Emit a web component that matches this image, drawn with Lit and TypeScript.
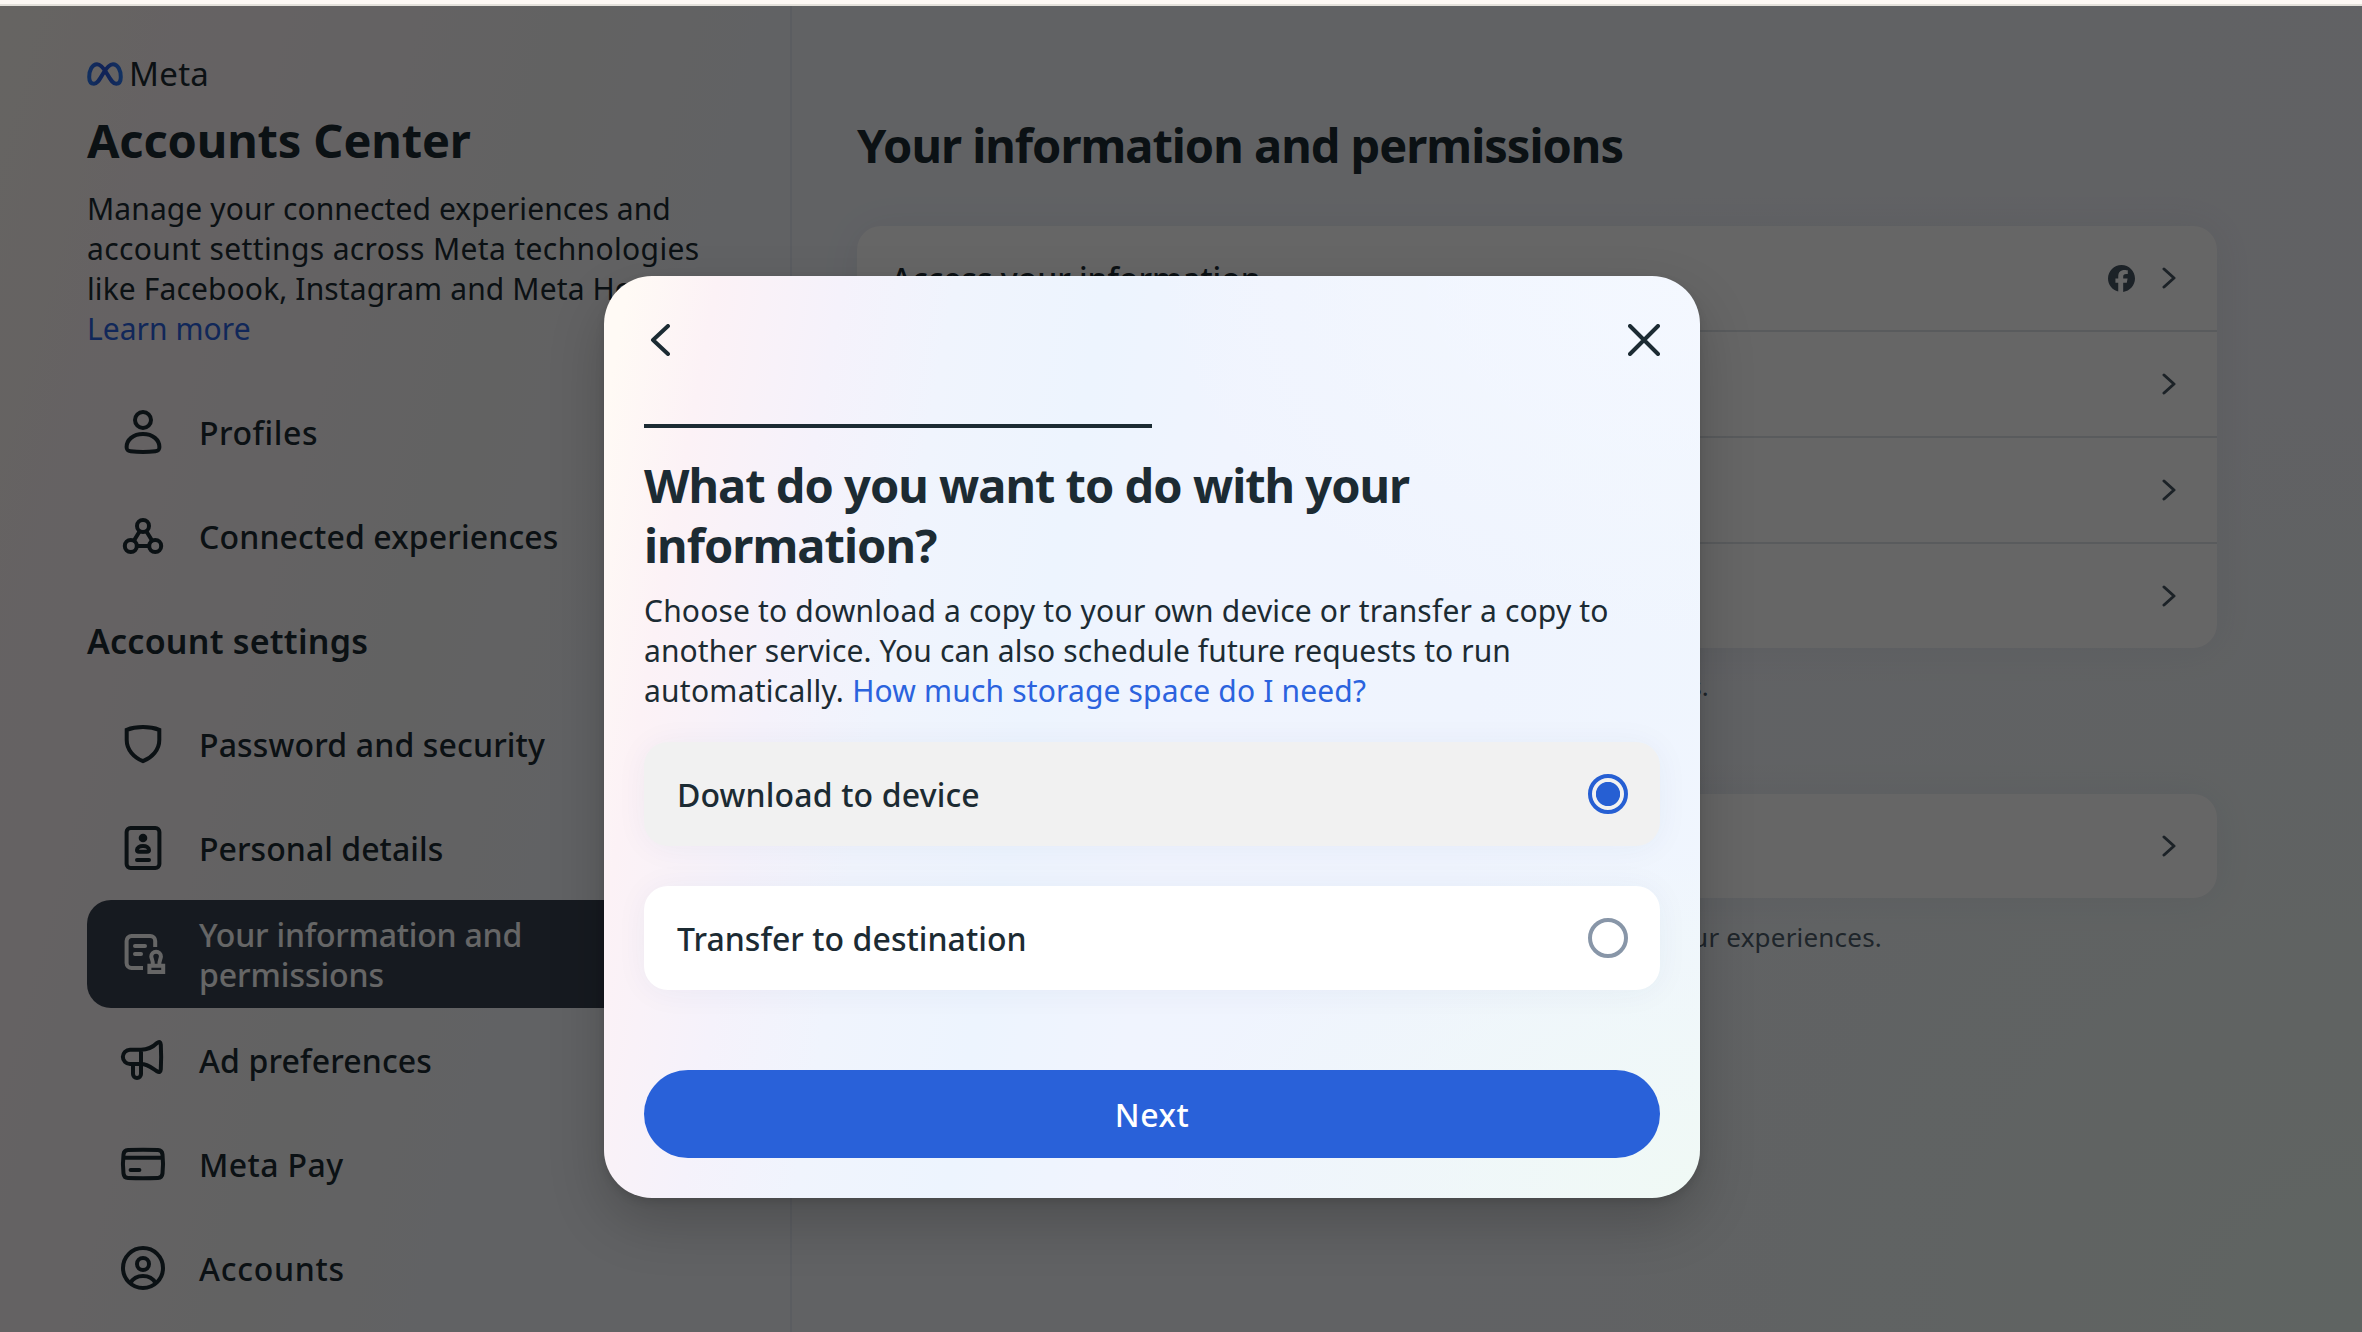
import { LitElement, html, svg, css, TemplateResult } from "lit";
import { classMap } from "lit/directives/class-map.js";

type Line = { text: string; track: number; link?: boolean };

const line = (l: Line) =>
  html`<span class=${classMap({ link: !!l.link })} style="letter-spacing:${l.track}px">${l.text}</span>`;

const stroke = (content: TemplateResult) => html`
  <svg class="nav-icon" viewBox="0 0 48 48" fill="none" stroke="currentColor" stroke-width="4"
    stroke-linecap="round" stroke-linejoin="round">${content}</svg>`;

const icons: Record<string, TemplateResult> = {
  profile: stroke(svg`<circle cx="24" cy="12" r="8"/>
    <path d="M24 26C14 26 7.6 32 7.6 39c0 3 1 3.9 4 4.2 6 .7 18.800 .7 24.800 0 3-.3 4-1.200 4-4.200C40.400 32 34 26 24 26Z"/>`),
  connected: stroke(svg`<circle cx="24" cy="14" r="6"/><circle cx="11.800" cy="34" r="6"/><circle cx="36.200" cy="34" r="6"/>
    <path d="M20.500 19.500L15 28.500M27.500 19.500L33 28.500M18 34H30"/>`),
  shield: stroke(svg`<path stroke-linejoin="miter" d="M7.700 9.800C17 6.200 31 6.200 40.300 9.800V20C40.300 30 33 37.500 24 41.200 15 37.500 7.700 30 7.700 20Z"/>`),
  details: stroke(svg`<rect x="7.600" y="4" width="32.800" height="40" rx="4"/>
    <circle cx="24" cy="14" r="4.300" fill="currentColor" stroke="none"/>
    <path d="M18 26c0-2.500 2.500-4 6-4s6 1.500 6 4c0 1.400-.6 1.800-2 1.800h-8c-1.400 0-2-.4-2-1.800ZM18 36H30"/>`),
  stamp: stroke(svg`<path stroke-linecap="butt" d="M36.200 17V11a5 5 0 0 0-5-5H12.600a5 5 0 0 0-5 5V33a5 5 0 0 0 5 5H24"/>
    <path d="M16 16H26M16 24H22"/>
    <path stroke-linejoin="miter" d="M30.400 35.800H44.200V42H30.400Z"/>
    <path d="M33.800 35C34.500 31 32.300 29 32.300 26.500a4.800 4.800 0 0 1 9.600 0C41.900 29 39.800 31 40.500 35"/>`),
  horn: stroke(svg`<path d="M22 13.700H11a7 7 0 0 0 0 14.300H22c7 0 11 4.200 16 7.300 2.500 1.500 3.600 .5 3.800-2C42.300 25 42.300 17 41.800 8.500c-.2-2.500-1.600-3.500-3.800-1.500C33 12 29 13.700 22 13.700V28M14 28V38a4 4 0 0 0 8 0V28"/>`),
  card: stroke(svg`<path d="M9 10C18 9.800 30 9.800 39 10c3 .1 4.200 1.500 4.500 4.500 .7 6 .7 13 0 19-.3 3-1.500 4.400-4.500 4.500-9 .2-21 .2-30 0-3-.1-4.200-1.500-4.500-4.500-.7-6-.7-13 0-19C4.800 11.500 6 10.100 9 10ZM4.500 17.700H43.500M11.600 30H20.400"/>`),
  account: stroke(svg`<circle cx="24" cy="24" r="20"/><circle cx="24" cy="20" r="6"/>
    <path d="M11.500 39C14 34.500 18 32 24 32S34 34.500 36.500 39"/>`),
};

const chevron = html`
  <svg class="chevron" viewBox="0 0 14 22" fill="none" stroke="currentColor" stroke-width="3"
    stroke-linecap="round" stroke-linejoin="round"><path d="M2 2L12 11L2 20"/></svg>`;

const facebook = html`
  <svg class="facebook" viewBox="0 0 24 24" fill="currentColor">
    <path d="M24 12C24 5.400 18.600 0 12 0S0 5.400 0 12c0 5.600 3.900 10.300 9.100 11.600V15.700H6.600V12h2.500v-1.600c0-4.100 1.800-6 5.900-6 .8 0 2.100.2 2.600.3v3.400c-.3 0-.8 0-1.400 0-2 0-2.700.7-2.700 2.700V12h3.900l-.7 3.700h-3.200v8.200C19.400 23.200 24 18.100 24 12Z"/>
  </svg>`;

class SideNav extends LitElement {
  static styles = css`
    :host { display: block; width: 792px; flex: none; box-sizing: border-box; padding: 47px 87px 0;
      border-right: 2px solid #e4e8f2; color: #1c2b33; }
    svg { display: block; flex: none; }
    .brand { display: flex; align-items: center; gap: 6px; height: 42px; font-size: 33px; line-height: 42px; letter-spacing: 0.3px; }
    .brand svg { width: 36px; height: 24px; }
    .title { margin: 15px 0 0; font-size: 47px; line-height: 60px; font-weight: 700; letter-spacing: -0.15px; white-space: nowrap; }
    .intro { margin: 19px 0 31px; display: flex; flex-direction: column; font-size: 30px; line-height: 40px; white-space: pre; }
    .link { color: #2b63de; }
    .item { display: flex; align-items: center; gap: 32px; width: 618px; height: 104px; padding: 0 32px;
      box-sizing: border-box; border-radius: 24px; font-size: 32px; line-height: 40px; font-weight: 500; }
    .item.active { height: 108px; background: #384250; color: #fff; }
    .nav-icon { width: 48px; height: 48px; }
    .labels { display: flex; flex-direction: column; padding-top: 2px; }
    .section { height: 104px; padding-top: 2px; box-sizing: border-box; display: flex; align-items: center;
      font-size: 34px; font-weight: 600; letter-spacing: 0.22px; }
  `;
  private item(icon: string, lines: Line[], active = false) {
    return html`<div class=${classMap({ item: true, active })}>${icons[icon]}<div class="labels">${lines.map(line)}</div></div>`;
  }
  render() {
    return html`
      <div class="brand">
        <svg viewBox="0 0 36 24" fill="none" stroke="url(#m)" stroke-width="4">
          <defs><linearGradient id="m" gradientUnits="userSpaceOnUse" x1="0" y1="14" x2="36" y2="10">
            <stop offset="0" stop-color="#2d7af0"/><stop offset=".5" stop-color="#2b55d8"/><stop offset="1" stop-color="#2f7ff5"/>
          </linearGradient></defs>
          <path d="M2.200 15C2.200 8 5.200 2.200 10 2.200c4 0 7 4.300 10.500 10.300 3.500 6 5.500 9.200 8.700 9.200 3 0 4.600-2.700 4.600-6.700C33.800 8 30.800 2.200 26 2.200c-3.500 0-6.500 3.300-10.500 10.300C11.800 19 10 21.700 7 21.700 4 21.700 2.200 19.500 2.200 15Z"/>
        </svg>
        <span>Meta</span>
      </div>
      <h1 class="title">Accounts Center</h1>
      <div class="intro">
        ${[
          { text: "Manage your connected experiences and", track: 0.1 },
          { text: "account settings across Meta technologies", track: 0.37 },
          { text: "like Facebook, Instagram and Meta Horizon.", track: 0.12 },
          { text: "Learn more", track: 0.05, link: true },
        ].map(line)}
      </div>
      ${this.item("profile", [{ text: "Profiles", track: 0.55 }])}
      ${this.item("connected", [{ text: "Connected experiences", track: 0.15 }])}
      <div class="section">Account settings</div>
      ${this.item("shield", [{ text: "Password and security", track: 0.15 }])}
      ${this.item("details", [{ text: "Personal details", track: 0.05 }])}
      ${this.item("stamp", [{ text: "Your information and", track: -0.22 }, { text: "permissions", track: -0.05 }], true)}
      ${this.item("horn", [{ text: "Ad preferences", track: 0.15 }])}
      ${this.item("card", [{ text: "Meta Pay", track: 0.4 }])}
      ${this.item("account", [{ text: "Accounts", track: 0.75 }])}
    `;
  }
}
customElements.define("side-nav", SideNav);

class InfoPanel extends LitElement {
  static styles = css`
    :host { display: block; padding: 109px 0 0 65px; color: #1c2b33; }
    svg { display: block; flex: none; }
    .title { margin: 0 0 51px; font-size: 47px; line-height: 60px; font-weight: 700; letter-spacing: -1px; white-space: nowrap; }
    .card { width: 1360px; border-radius: 24px; background: #fff; box-shadow: 0 2px 40px rgba(40, 70, 110, 0.07); }
    .row { display: flex; align-items: center; height: 104px; padding: 0 41px 0 34px; font-size: 32px;
      font-weight: 500; letter-spacing: -0.05px; }
    .row + .row { border-top: 2px solid #dee3e9; }
    .label { flex: 1; }
    .trail { display: flex; align-items: center; gap: 27px; color: #465562; }
    .facebook { width: 27px; height: 27px; }
    .chevron { width: 14px; height: 22px; }
    .note { margin: 20px 0 90px; height: 36px; line-height: 36px; font-size: 26px; color: #4f5e6b; text-align: right;
      white-space: nowrap; letter-spacing: 0.2px; }
    .note.first { width: 852px; }
    .note.second { width: 1025px; margin-top: 21px; }
  `;
  private row(label: string, fb = false) {
    return html`<div class="row"><span class="label">${label}</span><span class="trail">${fb ? facebook : ""}${chevron}</span></div>`;
  }
  render() {
    return html`
      <h2 class="title">Your information and permissions</h2>
      <div class="card">
        ${this.row("Access your information", true)}
        ${this.row("Export your information")}
        ${this.row("Search history")}
        ${this.row("Your activity off Meta")}
      </div>
      <p class="note first">View and manage the information from your Meta accounts.</p>
      <div class="card">${this.row("Manage contacts")}</div>
      <p class="note second">Control what information Meta can use to influence your experiences.</p>
    `;
  }
}
customElements.define("info-panel", InfoPanel);

class ExportDialog extends LitElement {
  static styles = css`
    :host { display: flex; flex-direction: column; box-sizing: border-box; width: 1096px; height: 922px;
      padding: 48px 40px 40px; border-radius: 48px; color: #1c2b33;
      background:
        radial-gradient(ellipse 50% 38% at 100% 100%, rgba(240, 249, 245, 1), rgba(240, 249, 245, 0)),
        radial-gradient(ellipse 50% 40% at 100% 0%, rgba(244, 248, 255, 1), rgba(244, 248, 255, 0)),
        linear-gradient(100deg, #fffaf5 2%, #fcf2f6 9%, #f5f2fb 19%, #f0f4fd 28%, #edf4fe 40%, #f0f4fe 52%, #eff4fe 75%, #f0f6fe 100%);
      box-shadow: 0 24px 56px rgba(0, 0, 0, 0.2), 0 4px 8px rgba(0, 0, 0, 0.1); }
    svg { display: block; }
    .bar { display: flex; justify-content: space-between; padding: 0 0 0 6px; height: 32px; }
    .back { width: 20px; height: 32px; }
    .close { width: 32px; height: 32px; }
    .progress { width: 508px; height: 4px; margin-top: 68px; background: #1c2b33; }
    .title { margin: 27px 0 0; font-size: 47px; line-height: 60px; font-weight: 700; white-space: nowrap; display: flex; flex-direction: column; }
    .body { margin-top: 16px; font-size: 30px; line-height: 40px; white-space: pre; display: flex; flex-direction: column; }
    .link { color: #2b63de; }
    .option { display: flex; align-items: center; justify-content: space-between; box-sizing: border-box; height: 104px;
      padding: 0 32px 0 33px; border-radius: 24px; background: #fff; font-size: 32px; font-weight: 500;
      box-shadow: 0 2px 32px rgba(40, 50, 110, 0.05); }
    .option.first { margin: 31px 0 40px; }
    .option.on { background: #f1f1f1; }
    .radio { width: 40px; height: 40px; box-sizing: border-box; border: 4px solid #8896a8; border-radius: 50%; }
    .on .radio { border-color: #265fd3; background: radial-gradient(circle, #265fd3 11.700px, #f1f1f1 12.500px); }
    .next { margin-top: auto; height: 88px; border-radius: 44px; background: #2961d9; color: #fff; display: flex;
      align-items: center; justify-content: center; font-size: 32px; font-weight: 500; letter-spacing: 0.6px; }
  `;
  render() {
    return html`
      <div class="bar">
        <svg class="back" viewBox="0 0 20 32" fill="none" stroke="currentColor" stroke-width="4" stroke-linecap="round" stroke-linejoin="round"><path d="M18 2L3 16L18 30"/></svg>
        <svg class="close" viewBox="0 0 32 32" fill="none" stroke="currentColor" stroke-width="4" stroke-linecap="round"><path d="M2 2L30 30M30 2L2 30"/></svg>
      </div>
      <div class="progress"></div>
      <div class="title">
        ${line({ text: "What do you want to do with your", track: -1 })}
        ${line({ text: "information?", track: -0.95 })}
      </div>
      <div class="body">
        ${line({ text: "Choose to download a copy to your own device or transfer a copy to", track: 0.17 })}
        ${line({ text: "another service. You can also schedule future requests to run", track: 0.1 })}
        <div>${line({ text: "automatically. ", track: 0.25 })}${line({ text: "How much storage space do I need?", track: 0.16, link: true })}</div>
      </div>
      <div class="option first on">${line({ text: "Download to device", track: 0.15 })}<i class="radio"></i></div>
      <div class="option">${line({ text: "Transfer to destination", track: 0.05 })}<i class="radio"></i></div>
      <div class="next">Next</div>
    `;
  }
}
customElements.define("export-dialog", ExportDialog);

class AppRoot extends LitElement {
  static styles = css`
    :host { display: block; position: relative; width: 2362px; height: 1332px; overflow: hidden;
      font-family: "Noto Sans", "Open Sans", sans-serif; }
    .strip { height: 4px; background: #fdf8f4; border-bottom: 2px solid #e3e0da; }
    .page { display: flex; height: 1326px; overflow: hidden;
      background:
        radial-gradient(ellipse 40% 70% at 100% 100%, rgba(238, 250, 244, 1), rgba(238, 250, 244, 0)),
        linear-gradient(105deg, #fefaf4 0%, #fdf4f8 9%, #f5f4f6 22%, #f2f5fb 32%, #f3f5fb 60%, #f2f3f9 100%); }
    .overlay { position: absolute; inset: 6px 0 0 0; background: rgba(0, 0, 0, 0.6); padding: 270px 0 0 604px; }
  `;
  render() {
    return html`
      <div class="strip"></div>
      <div class="page"><side-nav></side-nav><info-panel></info-panel></div>
      <div class="overlay"><export-dialog></export-dialog></div>
    `;
  }
}
customElements.define("app-root", AppRoot);
